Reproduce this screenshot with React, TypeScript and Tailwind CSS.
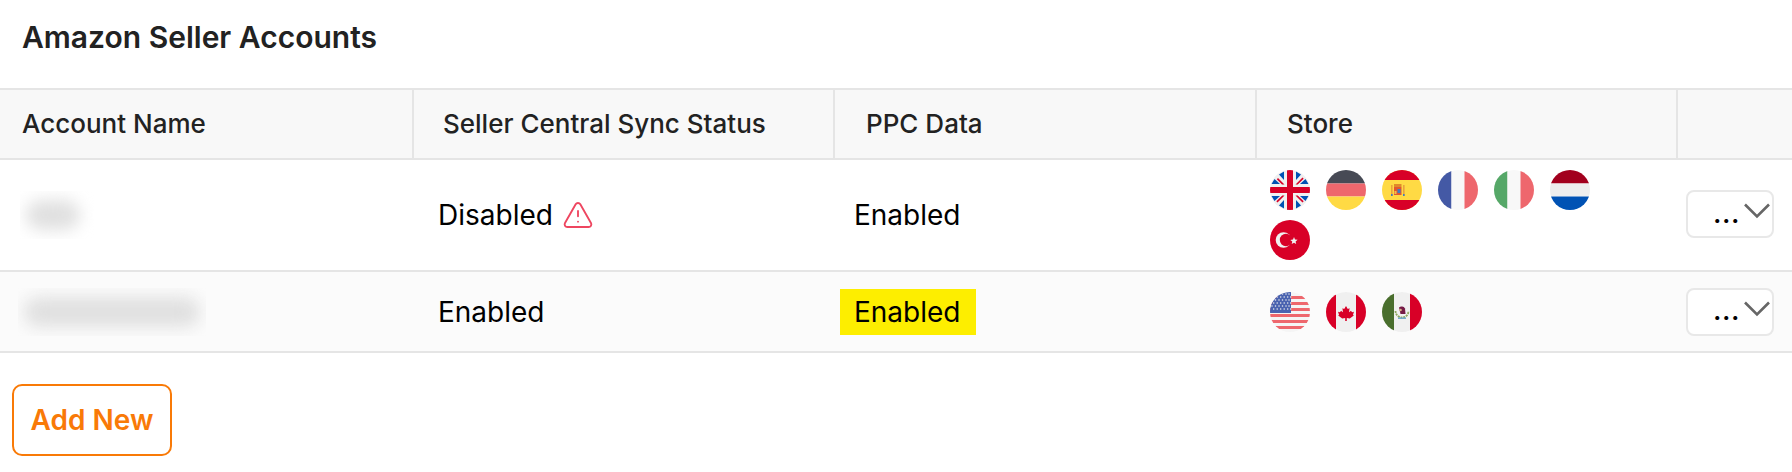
import { TriangleAlert } from 'lucide-react'
import type { ReactNode } from 'react'

const red = '#d80027'

function Flag({ id, children }: { id: string; children: ReactNode }) {
  return (
    <svg viewBox="0 0 40 40" className="w-10 h-10 shrink-0">
      <clipPath id={id}>
        <circle cx="20" cy="20" r="20" />
      </clipPath>
      <g clipPath={`url(#${id})`}>{children}</g>
    </svg>
  )
}

function Stripes({ id, colors, vertical }: { id: string; colors: [string, string, string]; vertical?: boolean }) {
  return (
    <Flag id={id}>
      {colors.map((c, i) =>
        vertical ? (
          <rect key={i} x={[0, 13.5, 26.5][i]} y="0" width={[13.5, 13, 13.5][i]} height="40" fill={c} />
        ) : (
          <rect key={i} x="0" y={[0, 13.5, 26.5][i]} width="40" height={[13.5, 13, 13.5][i]} fill={c} />
        ),
      )}
    </Flag>
  )
}

function UK() {
  return (
    <Flag id="uk">
      <rect width="40" height="40" fill="#f0f0f0" />
      {/* blue corners */}
      <path d="M4.5 9l5.5 5H1.5zM9 4.5l5 5.5V1.5zM35.5 9L30 14h8.5zM31 4.5L26 10V1.5zM4.5 31l5.5-5H1.5zM9 35.5l5-5.5v8.5zM35.5 31L30 26h8.5zM31 35.5L26 30v8.5z" fill="#0052b4" />
      <path d="M17 0h6v17h17v6H23v17h-6V23H0v-6h17z" fill={red} />
      <path d="M25.5 14.5l7-7 1.2 1.2-6 5.8zM14.5 25.5l-7 7-1.2-1.2 6-5.8zM14.5 14.5L8 8 6.8 9.2l5.2 5.3zM25.5 25.5l7 7 1.2-1.2-6-5.8z" fill={red} />
    </Flag>
  )
}

function Spain() {
  return (
    <Flag id="es">
      <rect width="40" height="40" fill="#ffda44" />
      <rect width="40" height="10" fill={red} />
      <rect y="30" width="40" height="10" fill={red} />
      <rect x="9" y="15" width="1.6" height="11" fill="#e8a33d" />
      <rect x="9" y="24" width="1.6" height="2" fill="#3f7fc0" />
      <rect x="21" y="15" width="1.6" height="11" fill="#e8a33d" />
      <rect x="21" y="24" width="1.6" height="2" fill="#3f7fc0" />
      <rect x="12" y="14" width="7.5" height="3" fill="#e08a2a" />
      <rect x="12" y="17" width="7.5" height="8" fill="#e2562f" />
      <rect x="15.5" y="19" width="3" height="4" fill="#3f7fc0" />
      <rect x="12.5" y="21" width="2" height="3" fill="#f2c14a" />
    </Flag>
  )
}

function Turkey() {
  return (
    <Flag id="tr">
      <rect width="40" height="40" fill={red} />
      <circle cx="13.5" cy="20" r="7.8" fill="#f0f0f0" />
      <circle cx="16" cy="20" r="6.2" fill={red} />
      <path d="M20.3 19.9l2.7-.3 1-2.5 1 2.4 2.6.3-2 1.7.6 2.6-2.2-1.4-2.3 1.4.6-2.6z" fill="#f0f0f0" />
    </Flag>
  )
}

function USA() {
  const bars = [4, 10, 16, 22, 28, 34]
  const rows = [2, 5, 8, 11, 14, 17]
  const columns = [2, 5.5, 9, 12.5, 16, 19]
  return (
    <Flag id="us">
      <rect width="40" height="40" fill="#f5f5f5" />
      {bars.map((y) => (
        <rect key={y} x="0" y={y} width="40" height="3" fill="#ee676d" />
      ))}
      <rect width="21" height="21" fill="#4a63b0" />
      {rows.map((y, r) =>
        columns.map((x) => <circle key={`${x}-${y}`} cx={x + (r % 2) * 1.7} cy={y} r="0.75" fill="#eeeeee" />),
      )}
    </Flag>
  )
}

function Canada() {
  return (
    <Flag id="ca">
      <rect width="40" height="40" fill="#f0f0f0" />
      <rect width="10" height="40" fill={red} />
      <rect x="30" width="10" height="40" fill={red} />
      <path d="M20 14l1.8 3 1.8-.8-.6 4 2-1.5 1 1.5 2-.4-1 3 .8.6-4 3-3-.4v3h-1.6v-3l-3 .4-4-3 .8-.6-1-3 2 .4 1-1.5 2 1.5-.6-4 1.8.8z" fill={red} />
    </Flag>
  )
}

function Mexico() {
  return (
    <Flag id="mx">
      <rect width="40" height="40" fill="#f0f0f0" />
      <rect width="12" height="40" fill="#496e2d" />
      <rect x="28" width="12" height="40" fill={red} />
      <path d="M13.5 19a6.5 6.5 0 0 0 13 0" fill="none" stroke="#8ba65c" strokeWidth="1.8" strokeDasharray="2 0.8" />
      <path d="M17 15.5a4 4 0 0 1 6 1l.5 5.5h-5z" fill="#751a46" />
      <circle cx="18.5" cy="18" r="1.3" fill="#d8b38a" />
      <rect x="16" y="25.5" width="8" height="1.4" fill="#6aa3cc" />
    </Flag>
  )
}

function Blurred({ w, blobW }: { w: string; blobW: string }) {
  return (
    <div className={`h-[48px] ${w} overflow-hidden flex items-center pl-[6px]`}>
      <div className={`h-[30px] ${blobW} rounded-full bg-[#e0e0e0] blur-[8px]`} />
    </div>
  )
}

function ActionSelect() {
  return (
    <div className="w-[88px] h-[48px] border-2 border-[#e8e8e8] rounded-lg bg-white flex items-center pl-[25px] gap-[4px]">
      <span className="text-[28px] leading-none font-medium text-black tracking-[0.5px] mt-[-3px]">...</span>
      <svg viewBox="0 0 26 16" className="w-[26px] h-4 mt-[-6px] shrink-0" fill="none" stroke="#666666" strokeWidth="2.6">
        <path d="M1 1.5l12 12 12-12" />
      </svg>
    </div>
  )
}

export default function App() {
  const cols = 'grid grid-cols-[414px_421px_422px_421px_1fr]'
  const headCell = 'flex items-center h-full text-[26px] font-medium text-[#222222] border-r-2 border-[#e5e5e5]'

  return (
    <div className="w-[1792px] h-[472px] bg-white overflow-hidden font-['Inter',sans-serif]">
      <h1 className="h-[88px] pl-[22px] pt-[18px] text-[30px] leading-[38px] font-semibold text-[#222222]">
        Amazon Seller Accounts
      </h1>

      {/* Table head */}
      <div className={`${cols} h-[72px] bg-[#f8f8f8] border-y-2 border-[#e5e5e5]`}>
        <div className={`${headCell} pl-[22px] pb-[1px]`}>Account Name</div>
        <div className={`${headCell} pl-[29px] pb-[1px]`}>Seller Central Sync Status</div>
        <div className={`${headCell} pl-[31px] pb-[1px]`}>PPC Data</div>
        <div className={`${headCell} pl-[30px] pb-[1px]`}>Store</div>
        <div />
      </div>

      {/* Row 1 */}
      <div className={`${cols} h-[112px] border-b-2 border-[#e5e5e5] items-center text-[28px] text-black`}>
        <Blurred w="w-[74px] ml-[20px]" blobW="w-[54px]" />
        <div className="pl-[24px] flex items-center gap-[9px]">
          Disabled
          <TriangleAlert className="w-[32px] h-[32px] text-[#ee4660]" strokeWidth={1.4} />
        </div>
        <div className="pl-[19px]">Enabled</div>
        <div className="pl-[13px] flex flex-wrap gap-x-4 gap-y-[10px] w-[340px]">
          <UK />
          <Stripes id="de" colors={['#474a55', '#ee676d', '#ffda44']} />
          <Spain />
          <Stripes id="fr" colors={['#4459a5', '#f8f8f8', '#ee676d']} vertical />
          <Stripes id="it" colors={['#56a868', '#f8f8f8', '#ee676d']} vertical />
          <Stripes id="nl" colors={['#a2001d', '#eeeeee', '#0052b4']} />
          <Turkey />
        </div>
        <div className="pl-[8px] mt-[-2px]">
          <ActionSelect />
        </div>
      </div>

      {/* Row 2 */}
      <div className={`${cols} h-[81px] bg-[#fbfbfb] border-b-2 border-[#e5e5e5] items-center text-[28px] text-black`}>
        <Blurred w="w-[188px] ml-[18px]" blobW="w-[176px]" />
        <div className="pl-[24px]">Enabled</div>
        <div className="pl-[5px]">
          <span className="inline-flex items-center h-[46px] pl-[14px] w-[136px] bg-[#fdee00]">Enabled</span>
        </div>
        <div className="pl-[13px] flex gap-4">
          <USA />
          <Canada />
          <Mexico />
        </div>
        <div className="pl-[8px]">
          <ActionSelect />
        </div>
      </div>

      <div className="pl-3 pt-[31px]">
        <button className="w-[160px] h-[72px] border-2 border-[#f97a07] rounded-[10px] text-[28px] font-semibold text-[#f97a07] bg-white">
          Add New
        </button>
      </div>
    </div>
  )
}
